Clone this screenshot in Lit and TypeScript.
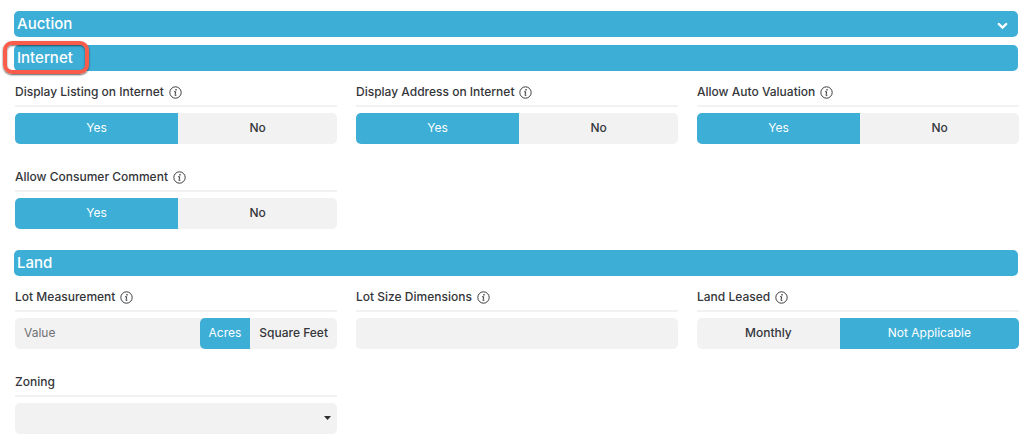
import { LitElement, html, css, svg, nothing } from "lit";
import { customElement, property } from "lit/decorators.js";

const infoIcon = html`<svg class="info" viewBox="0 0 16 16" aria-hidden="true">
  ${svg`<circle cx="8" cy="8" r="7" fill="none" stroke="currentColor" stroke-width="1.2"></circle>
  <circle cx="8.6" cy="4.7" r="1" fill="currentColor"></circle>
  <path d="M6.6 7.1h1.7l-.9 4.2c-.1.5.2.6 1.3.2" fill="none" stroke="currentColor" stroke-width="1.2" stroke-linecap="round" stroke-linejoin="round"></path>`}
</svg>`;

const sharedStyles = css`
  :host {
    display: block;
  }
  .field {
    margin: 0;
    padding: 0;
    border: 0;
    min-width: 0;
  }
  .label {
    display: flex;
    align-items: center;
    gap: 5px;
    box-sizing: border-box;
    width: 100%;
    padding: 0 0 1px;
    border-bottom: 2px solid #f2f2f2;
    margin-bottom: 6px;
    line-height: 24px;
    font-weight: 500;
  }
  .info {
    width: 13px;
    height: 13px;
    flex: none;
  }
  .control {
    display: flex;
    height: 31px;
    border-radius: 5px;
    background: #f2f2f2;
    overflow: hidden;
  }
  .text {
    flex: 1 1 0;
    box-sizing: border-box;
    width: 100%;
    min-width: 0;
    height: 31px;
    padding: 0 9px 2px;
    border: 0;
    border-radius: 5px;
    background: #f2f2f2;
    color: inherit;
    font: inherit;
  }
  .text::placeholder {
    color: #707174;
    opacity: 1;
  }
  .option {
    flex: 1 1 auto;
    position: relative;
    padding: 0 9px;
    line-height: 29px;
    text-align: center;
    font-weight: 500;
    white-space: nowrap;
    cursor: pointer;
  }
  .option.fixed {
    flex: none;
  }
  .option:has(input:checked) {
    background: #3daed6;
    color: #fff;
    font-weight: 400;
  }
  .option.fixed:has(input:checked) {
    border-radius: 5px 0 0 5px;
  }
  .option:has(input:focus-visible) {
    outline: 2px solid #1c7797;
    outline-offset: -2px;
  }
  .radio {
    position: absolute;
    inset: 0;
    margin: 0;
    opacity: 0;
    cursor: pointer;
  }
`;

@customElement("choice-field")
export class ChoiceField extends LitElement {
  @property() label = "";
  @property({ attribute: false }) options: string[] = ["Yes", "No"];
  @property() value = "Yes";
  @property() placeholder = "";

  static styles = sharedStyles;

  render() {
    return html`<fieldset class="field">
      <legend class="label">${this.label}${infoIcon}</legend>
      <div class="control">
        ${this.placeholder
          ? html`<input class="text" type="text" aria-label=${this.label} placeholder=${this.placeholder} />`
          : nothing}
        ${this.options.map(
          (o) => html`<label class="option ${this.placeholder ? "fixed" : ""}"
            ><input class="radio" type="radio" name="choice" .value=${o} ?checked=${o === this.value} />${o}</label
          >`
        )}
      </div>
    </fieldset>`;
  }
}

@customElement("app-root")
export class AppRoot extends LitElement {
  static styles = [
    sharedStyles,
    css`
      :host {
        padding: 11px 5px 5px 14px;
        background: #fff;
        color: #34363a;
        font: 400 12px Inter, "Open Sans", sans-serif;
      }
      .bar {
        display: flex;
        align-items: center;
        justify-content: space-between;
        position: relative;
        box-sizing: border-box;
        width: calc(100% - 1px);
        height: 26px;
        margin: 0;
        padding: 0 10px 0 3px;
        border: 0;
        border-radius: 5px;
        background: #3daed6;
        color: #fff;
        font: 500 15px/26px Inter, "Open Sans", sans-serif;
        text-align: left;
      }
      .toggle {
        margin-bottom: 8px;
        cursor: pointer;
      }
      .chevron {
        width: 11px;
        height: 8px;
        margin-top: 3px;
      }
      .callout {
        position: absolute;
        left: -11px;
        top: -4px;
        box-sizing: border-box;
        width: 86px;
        height: 33px;
        border: 4px solid #f95c4b;
        border-radius: 9px;
        box-shadow: 0 1px 2px rgba(0, 0, 0, 0.65), inset 0 1px 2px rgba(0, 0, 0, 0.55);
        pointer-events: none;
      }
      .fields {
        display: grid;
        grid-template-columns: repeat(3, minmax(0, 1fr));
        gap: 21px 19px;
        padding: 9px 0 21px 1px;
      }
      .select {
        position: relative;
      }
      .dropdown {
        appearance: none;
        width: 100%;
        border: 0;
        background: transparent;
        font: inherit;
        color: inherit;
      }
      .caret {
        position: absolute;
        right: 6px;
        top: 13px;
        width: 7px;
        height: 4px;
        pointer-events: none;
      }
    `,
  ];

  render() {
    return html`<form>
      <button class="bar toggle" type="button" aria-expanded="false">
        Auction
        <svg class="chevron" viewBox="0 0 11 8" aria-hidden="true">
          <path d="M1.8 2l3.7 3.6L9.2 2" fill="none" stroke="#fff" stroke-width="2.4" stroke-linecap="round"></path>
        </svg>
      </button>
      <section>
        <h2 class="bar">Internet<span class="callout"></span></h2>
        <div class="fields">
          <choice-field label="Display Listing on Internet"></choice-field>
          <choice-field label="Display Address on Internet"></choice-field>
          <choice-field label="Allow Auto Valuation"></choice-field>
          <choice-field label="Allow Consumer Comment"></choice-field>
        </div>
      </section>
      <section>
        <h2 class="bar">Land</h2>
        <div class="fields">
          <choice-field
            label="Lot Measurement"
            placeholder="Value"
            value="Acres"
            .options=${["Acres", "Square Feet"]}
          ></choice-field>
          <div class="field">
            <label class="label" for="dimensions">Lot Size Dimensions${infoIcon}</label>
            <div class="control"><input class="text" id="dimensions" type="text" /></div>
          </div>
          <choice-field
            label="Land Leased"
            value="Not Applicable"
            .options=${["Monthly", "Not Applicable"]}
          ></choice-field>
          <div class="field">
            <label class="label" for="zoning">Zoning</label>
            <div class="control select">
              <select class="dropdown" id="zoning">
                <option></option>
              </select>
              <svg class="caret" viewBox="0 0 7 4" aria-hidden="true"><path d="M0 0h7L3.5 4z" fill="#2c2e31"></path></svg>
            </div>
          </div>
        </div>
      </section>
    </form>`;
  }
}
